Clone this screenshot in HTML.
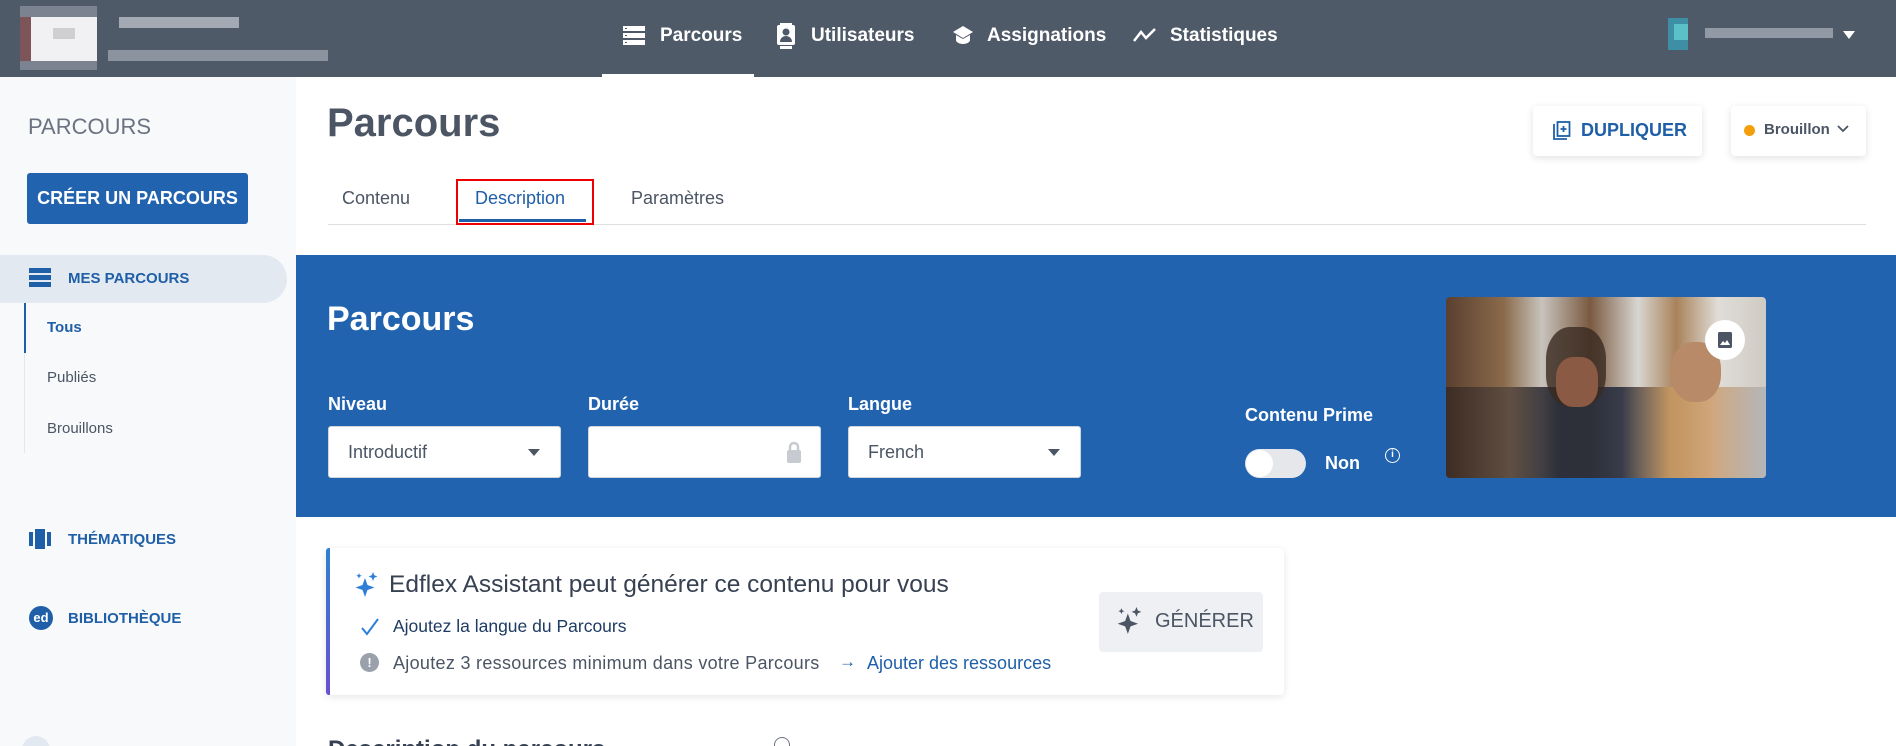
<!DOCTYPE html>
<html><head><meta charset="utf-8"><style>
*{box-sizing:border-box;margin:0;padding:0}
html{width:1896px;height:746px;overflow:hidden}
body{width:1896px;height:746px;overflow:hidden;background:#fff;font-family:"Liberation Sans","DejaVu Sans",sans-serif;position:relative;color:#374151}
.a{position:absolute}
.top{left:0;top:0;width:1896px;height:77px;background:#4f5a69}
.nav{color:#fff;font-size:19px;font-weight:bold;top:25px;white-space:nowrap}
.side{left:0;top:77px;width:296px;height:669px;background:#f7f9fb}
.lbl{color:#fff;font-size:18px;font-weight:bold}
.inp{height:52px;width:233px;background:#fff;border-radius:3px;top:426px;border:1px solid #d1d5db}
.inp span{position:absolute;left:19px;top:15px;font-size:18px;color:#4b5563}
.car{position:absolute;right:20px;top:22px;width:0;height:0;border-left:6px solid transparent;border-right:6px solid transparent;border-top:7px solid #4b5563}
.sub{font-size:15px;color:#4b5563;left:47px}
.sb{font-size:15px;color:#1f5fa8;font-weight:bold;left:68px}
</style></head><body>
<div class="a top"></div>
<div class="a" style="left:20px;top:6px;width:77px;height:64px;background:#7b8390"></div>
<div class="a" style="left:20px;top:17px;width:11px;height:44px;background:#7d5558"></div>
<div class="a" style="left:31px;top:17px;width:66px;height:44px;background:#f1f1f3"></div>
<div class="a" style="left:53px;top:28px;width:22px;height:11px;background:#cfcfd1"></div>
<div class="a" style="left:119px;top:17px;width:120px;height:11px;background:#a3aab3"></div>
<div class="a" style="left:108px;top:50px;width:220px;height:11px;background:#8b939e"></div>
<div class="a" style="left:602px;top:74px;width:152px;height:3px;background:#fff"></div>
<svg class="a" style="left:623px;top:26px" width="22" height="20" viewBox="0 0 22 20"><g fill="#fff"><rect x="0" y="0" width="22" height="5"/><rect x="0" y="7" width="22" height="5"/><rect x="0" y="14" width="22" height="5"/></g><g fill="#4f5a69"><rect x="2" y="2" width="2" height="1"/><rect x="2" y="9" width="2" height="1"/><rect x="2" y="16" width="2" height="1"/></g></svg>
<div class="a nav" style="left:660px">Parcours</div>
<svg class="a" style="left:776px;top:23px" width="20" height="26" viewBox="0 0 20 26"><rect x="1" y="2" width="18" height="20" rx="2" fill="#fff"/><rect x="4" y="0" width="12" height="3" fill="#fff"/><rect x="4" y="23" width="12" height="3" fill="#fff"/><circle cx="10" cy="9" r="3.5" fill="#4f5a69"/><path d="M4 19c0-4 3-6 6-6s6 2 6 6z" fill="#4f5a69"/></svg>
<div class="a nav" style="left:811px">Utilisateurs</div>
<svg class="a" style="left:952px;top:25px" width="22" height="22" viewBox="0 0 22 22"><path d="M11 1 1 7l10 6 10-6z" fill="#fff"/><path d="M4 10v5c0 2 3 4 7 4s7-2 7-4v-5l-7 4z" fill="#fff"/></svg>
<div class="a nav" style="left:987px">Assignations</div>
<svg class="a" style="left:1133px;top:27px" width="24" height="16" viewBox="0 0 24 16"><path d="M1 14 8 5l5 6 9-9" stroke="#fff" stroke-width="2.5" fill="none"/></svg>
<div class="a nav" style="left:1170px">Statistiques</div>
<div class="a" style="left:1668px;top:18px;width:20px;height:32px;background:#3e8fa6"></div>
<div class="a" style="left:1674px;top:24px;width:14px;height:16px;background:#5cc0c9"></div>
<div class="a" style="left:1705px;top:28px;width:128px;height:10px;background:#9199a4"></div>
<div class="a" style="left:1843px;top:31px;width:0;height:0;border-left:6px solid transparent;border-right:6px solid transparent;border-top:8px solid #fff"></div>
<div class="a side"></div>
<div class="a" style="left:28px;top:114px;font-size:22px;color:#6b7280">PARCOURS</div>
<div class="a" style="left:27px;top:173px;width:221px;height:51px;background:#2163ae;border-radius:3px;color:#fff;font-weight:bold;font-size:18px;text-align:center;line-height:51px">CRÉER UN PARCOURS</div>
<div class="a" style="left:0;top:255px;width:287px;height:48px;background:#e3e9f0;border-radius:0 24px 24px 0"></div>
<svg class="a" style="left:29px;top:268px" width="22" height="20" viewBox="0 0 22 20"><g fill="#1f5fa8"><rect y="0" width="22" height="5"/><rect y="7" width="22" height="5"/><rect y="14" width="22" height="5"/></g></svg>
<div class="a sb" style="top:270px">MES PARCOURS</div>
<div class="a" style="left:24px;top:303px;width:1px;height:150px;background:#e5e7eb"></div>
<div class="a" style="left:24px;top:303px;width:2px;height:50px;background:#1f5fa8"></div>
<div class="a sub" style="top:319px;color:#1f5fa8;font-weight:bold">Tous</div>
<div class="a sub" style="top:369px">Publiés</div>
<div class="a sub" style="top:420px">Brouillons</div>
<svg class="a" style="left:29px;top:529px" width="22" height="20" viewBox="0 0 22 20"><g fill="#1f5fa8"><rect x="0" y="3" width="4" height="14"/><rect x="6" y="0" width="10" height="20"/><rect x="18" y="3" width="4" height="14"/></g></svg>
<div class="a sb" style="top:531px">THÉMATIQUES</div>
<div class="a" style="left:29px;top:606px;width:24px;height:24px;border-radius:50%;background:#1f5fa8;color:#fff;font-size:13px;font-weight:bold;text-align:center;line-height:24px">ed</div>
<div class="a sb" style="top:610px">BIBLIOTHÈQUE</div>
<div class="a" style="left:22px;top:736px;width:28px;height:10px;overflow:hidden"><div style="width:28px;height:28px;border-radius:50%;background:#e3e9f0"></div></div>
<div class="a" style="left:327px;top:101px;font-size:40px;font-weight:bold;color:#4b5563">Parcours</div>
<div class="a" style="left:1533px;top:106px;width:169px;height:50px;background:#fff;border-radius:4px;box-shadow:0 2px 8px rgba(0,0,0,.12)"></div>
<svg class="a" style="left:1553px;top:121px" width="18" height="20" viewBox="0 0 18 20"><path d="M1 3v15h13" stroke="#1f5fa8" stroke-width="1.8" fill="none"/><rect x="4.5" y="1" width="12" height="14" stroke="#1f5fa8" stroke-width="1.8" fill="none"/><path d="M10.5 5v6M7.5 8h6" stroke="#1f5fa8" stroke-width="1.8"/></svg>
<div class="a" style="left:1581px;top:120px;font-size:18px;font-weight:bold;color:#1f5fa8">DUPLIQUER</div>
<div class="a" style="left:1731px;top:106px;width:135px;height:50px;background:#fff;border-radius:4px;box-shadow:0 2px 8px rgba(0,0,0,.12)"></div>
<div class="a" style="left:1744px;top:125px;width:11px;height:11px;border-radius:50%;background:#f59e0b"></div>
<div class="a" style="left:1764px;top:121px;font-size:15px;font-weight:bold;color:#4b5563">Brouillon</div>
<svg class="a" style="left:1837px;top:125px" width="12" height="8" viewBox="0 0 12 8"><path d="M1 1l5 5 5-5" stroke="#4b5563" stroke-width="1.8" fill="none"/></svg>
<div class="a" style="left:328px;top:224px;width:1538px;height:1px;background:#e0e0e0"></div>
<div class="a" style="left:342px;top:188px;font-size:18px;color:#4b5563">Contenu</div>
<div class="a" style="left:475px;top:188px;font-size:18px;color:#1f5fa8">Description</div>
<div class="a" style="left:459px;top:219px;width:127px;height:3px;background:#1f5fa8"></div>
<div class="a" style="left:456px;top:179px;width:138px;height:46px;border:2px solid #e00"></div>
<div class="a" style="left:631px;top:188px;font-size:18px;color:#4b5563">Paramètres</div>
<div class="a" style="left:296px;top:255px;width:1600px;height:262px;background:#2163ae"></div>
<div class="a" style="left:327px;top:300px;font-size:34px;font-weight:bold;color:#fff">Parcours</div>
<div class="a lbl" style="left:328px;top:394px">Niveau</div>
<div class="a lbl" style="left:588px;top:394px">Durée</div>
<div class="a lbl" style="left:848px;top:394px">Langue</div>
<div class="a inp" style="left:328px"><span>Introductif</span><i class="car"></i></div>
<div class="a inp" style="left:588px"><svg style="position:absolute;right:18px;top:13px" width="16" height="24" viewBox="0 0 16 24"><path d="M4 10V7a4 4 0 018 0v3" stroke="#c7cbd1" stroke-width="2.5" fill="none"/><rect x="1" y="10" width="14" height="13" rx="2" fill="#c7cbd1"/></svg></div>
<div class="a inp" style="left:848px"><span>French</span><i class="car"></i></div>
<div class="a lbl" style="left:1245px;top:405px">Contenu Prime</div>
<div class="a" style="left:1245px;top:449px;width:61px;height:29px;border-radius:15px;background:#e5e7eb"></div>
<div class="a" style="left:1246px;top:450px;width:27px;height:27px;border-radius:50%;background:#fff"></div>
<div class="a lbl" style="left:1325px;top:453px">Non</div>
<div class="a" style="left:1385px;top:448px;width:15px;height:15px;border:1.5px solid #fff;border-radius:50%;color:#fff;font-size:10px;text-align:center;line-height:12px;font-weight:bold">i</div>
<div class="a" style="left:1446px;top:297px;width:320px;height:181px;border-radius:4px;overflow:hidden;background:linear-gradient(90deg,#5a4030 0%,#8a6a4a 18%,#c8c3bd 30%,#7a5a40 45%,#d8d6d2 60%,#a9825a 72%,#e0ddd8 85%,#cfcac3 100%)">
<div class="a" style="left:0;top:90px;width:320px;height:91px;background:linear-gradient(90deg,#3a2a22 0%,#5a4a40 20%,#1f2430 35%,#2a3040 55%,#c49660 70%,#d0a070 82%,#b0b4b8 100%);opacity:.9"></div>
<div class="a" style="left:100px;top:30px;width:60px;height:80px;border-radius:40%;background:#3a2a22;opacity:.8"></div>
<div class="a" style="left:110px;top:60px;width:42px;height:50px;border-radius:40%;background:#8a5a44"></div>
<div class="a" style="left:225px;top:45px;width:50px;height:60px;border-radius:45%;background:#b88a68"></div>
</div>
<div class="a" style="left:1705px;top:320px;width:40px;height:40px;border-radius:50%;background:#fff"></div>
<svg class="a" style="left:1718px;top:332px" width="14" height="16" viewBox="0 0 14 16"><rect width="14" height="16" rx="1.5" fill="#4b5563"/><path d="M2 13l3-4 2 2 2-3 3 5z" fill="#fff"/></svg>
<div class="a" style="left:326px;top:548px;width:958px;height:147px;background:#fff;border-radius:4px;box-shadow:0 2px 8px rgba(0,0,0,.1)"></div>
<div class="a" style="left:326px;top:548px;width:4px;height:147px;background:linear-gradient(#2f80d0,#6a4fd0);border-radius:3px 0 0 3px"></div>
<svg class="a" style="left:355px;top:572px" width="24" height="26" viewBox="0 0 24 26"><path d="M10 6l2.5 7 7 2.5-7 2.5L10 25l-2.5-7-7-2.5 7-2.5z" fill="#2f7fd8"/><path d="M18 0l1.3 3.2L22.5 4.5 19.3 5.8 18 9l-1.3-3.2L13.5 4.5l3.2-1.3z" fill="#2f7fd8"/><path d="M4 1l.8 2 2 .8-2 .8L4 6.6l-.8-2-2-.8 2-.8z" fill="#2f7fd8"/></svg>
<div class="a" style="left:389px;top:571px;font-size:24.5px;color:#374151">Edflex Assistant peut générer ce contenu pour vous</div>
<svg class="a" style="left:360px;top:617px" width="20" height="20" viewBox="0 0 20 20"><path d="M2 11l5 6L18 2" stroke="#2f7fd8" stroke-width="2" fill="none"/></svg>
<div class="a" style="left:393px;top:616px;font-size:17.5px;color:#1f3b63">Ajoutez la langue du Parcours</div>
<div class="a" style="left:360px;top:653px;width:19px;height:19px;border-radius:50%;background:#9aa1ab;color:#fff;font-size:13px;font-weight:bold;text-align:center;line-height:19px">!</div>
<div class="a" style="left:393px;top:653px;font-size:18px;color:#4b5563;letter-spacing:.3px">Ajoutez 3 ressources minimum dans votre Parcours</div>
<div class="a" style="left:839px;top:652px;font-size:17px;color:#1f5fa8">→</div>
<div class="a" style="left:867px;top:653px;font-size:18px;color:#1f5fa8">Ajouter des ressources</div>
<div class="a" style="left:1099px;top:592px;width:164px;height:60px;background:#eef0f3;border-radius:4px"></div>
<svg class="a" style="left:1117px;top:607px" width="26" height="28" viewBox="0 0 24 26"><path d="M10 6l2.5 7 7 2.5-7 2.5L10 25l-2.5-7-7-2.5 7-2.5z" fill="#4b5563"/><path d="M18 0l1.3 3.2L22.5 4.5 19.3 5.8 18 9l-1.3-3.2L13.5 4.5l3.2-1.3z" fill="#4b5563"/><path d="M4 1l.8 2 2 .8-2 .8L4 6.6l-.8-2-2-.8 2-.8z" fill="#4b5563"/></svg>
<div class="a" style="left:1155px;top:610px;font-size:20px;color:#4b5563">GÉNÉRER</div>
<div class="a" style="left:328px;top:738px;width:500px;height:8px;overflow:hidden"><div style="font-size:24px;font-weight:bold;color:#374151;line-height:24px;margin-top:0">Description du parcours</div></div>
<div class="a" style="left:774px;top:737px;width:18px;height:9px;overflow:hidden"><div style="width:16px;height:16px;border:1.5px solid #6b7280;border-radius:50%"></div></div>
</body></html>
